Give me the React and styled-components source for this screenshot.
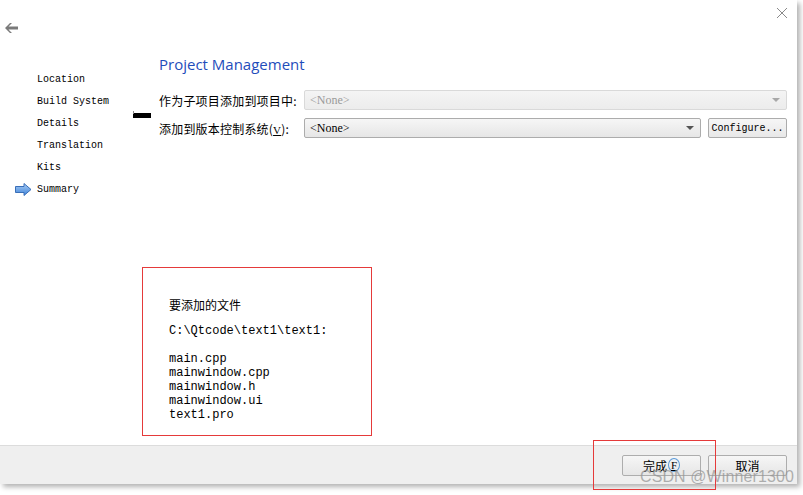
import React from 'react';
import styled, {createGlobalStyle} from 'styled-components';

const GlobalStyle = createGlobalStyle`
  html, body {
    margin: 0;
    padding: 0;
    background: #ffffff;
  }
  body {
    min-height: 495px;
    font-family: "Noto Sans CJK SC", "Noto Sans", sans-serif;
  }
`;

const Window = styled.div`
  position: relative;
  width: 797px;
  height: 484px;
  background: #ffffff;
  display: flex;
  flex-direction: column;
  box-shadow: 3px 3px 5px rgba(0, 0, 0, 0.3);
`;

const TitleBar = styled.div`
  height: 46px;
  display: flex;
  justify-content: space-between;
  align-items: flex-start;
`;

const BackButton = styled.div`
  margin: 22px 0 0 4px;
  width: 16px;
  height: 12px;
  display: flex;
`;

const CloseButton = styled.div`
  margin: 7px 9px 0 0;
  width: 12px;
  height: 12px;
  display: flex;
`;

const Body = styled.div`
  flex: 1;
  display: flex;
`;

const Sidebar = styled.div`
  width: 133px;
  padding-top: 22px;
  display: flex;
  flex-direction: column;
`;

const Step = styled.div`
  height: 22px;
  display: flex;
  align-items: center;
  font-family: "Liberation Mono", "DejaVu Sans Mono", monospace;
  font-size: 10px;
  color: #000;
`;

const StepMark = styled.div`
  width: 37px;
  display: flex;
  align-items: center;
  padding-left: 15px;
  box-sizing: border-box;
`;

const Divider = styled.div`
  width: 26px;
  padding-top: 66px;
`;

const Cursor = styled.div`
  width: 18px;
  height: 5px;
  background: #000;
  border-top: 1px solid #fff;
  position: relative;
  &::before {
    content: '';
    position: absolute;
    left: 0;
    top: -2px;
    width: 1px;
    height: 3px;
    background: #888;
  }
`;

const Content = styled.div`
  flex: 1;
  padding-right: 10px;
  display: flex;
  flex-direction: column;
`;

const Heading = styled.div`
  font-family: "Open Sans", "Noto Sans", sans-serif;
  font-size: 15px;
  color: #1f4dbb;
  height: 20px;
  line-height: 20px;
  margin-top: 8px;
`;

const FormRow = styled.div`
  display: flex;
  align-items: center;
  height: 20px;
  margin-top: ${p => p.$top}px;
  gap: 7px;
`;

const Label = styled.div`
  width: 138px;
  font-size: 12px;
  color: #000;
  white-space: nowrap;
  letter-spacing: 0.2px;
`;

const Mnemonic = styled.span`
  font-family: "Liberation Serif", serif;
  font-size: 11px;
  text-decoration: underline;
`;

const Combo = styled.div`
  flex: 1;
  height: 20px;
  box-sizing: border-box;
  border: 1px solid ${p => (p.$disabled ? '#d9d9d9' : '#acacac')};
  border-radius: 2px;
  background: ${p =>
    p.$disabled
      ? 'linear-gradient(#f4f4f4, #ececec)'
      : 'linear-gradient(#f6f6f6, #e6e6e6)'};
  display: flex;
  align-items: center;
  padding: 0 6px 0 5px;
  font-family: "Liberation Serif", serif;
  font-size: 12px;
  color: ${p => (p.$disabled ? '#9a9a9a' : '#000')};
`;

const ComboText = styled.span`
  flex: 1;
`;

const Caret = styled.span`
  width: 0;
  height: 0;
  border-left: 4px solid transparent;
  border-right: 4px solid transparent;
  border-top: 4px solid ${p => (p.$disabled ? '#a8a8a8' : '#555')};
`;

const ToolButton = styled.div`
  width: 79px;
  height: 20px;
  box-sizing: border-box;
  border: 1px solid #acacac;
  border-radius: 2px;
  background: linear-gradient(#f6f6f6, #e8e8e8);
  display: flex;
  align-items: center;
  justify-content: center;
  font-family: "Liberation Mono", monospace;
  font-size: 10px;
  color: #000;
`;

const FilesBox = styled.div`
  margin: 129px 0 0 -17px;
  width: 230px;
  height: 169px;
  box-sizing: border-box;
  border: 1px solid #e53a3a;
  padding: 28px 0 0 26px;
`;

const FilesTitle = styled.div`
  font-size: 12px;
  height: 18px;
  line-height: 18px;
  color: #000;
`;

const FilesPre = styled.pre`
  margin: 10px 0 0 0;
  font-family: "Liberation Mono", "Courier New", monospace;
  font-size: 12px;
  line-height: 14px;
  color: #000;
`;

const Footer = styled.div`
  height: 38px;
  background: #efefef;
  border-top: 1px solid #dcdcdc;
  display: flex;
  justify-content: flex-end;
  align-items: center;
  gap: 7px;
  padding-right: 10px;
`;

const DialogButton = styled.div`
  width: 79px;
  height: 21px;
  box-sizing: border-box;
  border: 1px solid #adadad;
  border-radius: 2px;
  background: linear-gradient(#f6f6f6, #e6e6e6);
  display: flex;
  align-items: center;
  justify-content: center;
  font-size: 12px;
  color: #000;
`;

const Circled = styled.span`
  display: inline-flex;
  align-items: center;
  justify-content: center;
  width: 12px;
  height: 14px;
  margin-left: 1px;
  border: 1px solid #5a9ad9;
  border-radius: 50%;
  font-family: "Liberation Serif", serif;
  font-size: 11px;
  text-decoration: underline;
  box-sizing: border-box;
`;

const Annotation = styled.div`
  position: absolute;
  left: 593px;
  top: 440px;
  width: 123px;
  height: 50px;
  box-sizing: border-box;
  border: 1px solid #e53a3a;
  pointer-events: none;
`;

const Watermark = styled.div`
  position: absolute;
  left: 640px;
  top: 468px;
  font-family: "Liberation Sans", Arial, sans-serif;
  font-size: 16px;
  color: rgba(150, 150, 150, 0.75);
  letter-spacing: 0.1px;
  pointer-events: none;
`;

const BackArrow = () => (
  <svg width="16" height="12" viewBox="0 0 16 12">
    <path d="M1 6 L6 1 L8 1 L4.5 4.6 L14 4.6 L14 7.4 L4.5 7.4 L8 11 L6 11 Z" fill="#7a7a7a" />
  </svg>
);

const CloseIcon = () => (
  <svg width="12" height="12" viewBox="0 0 12 12">
    <path d="M1 1 L11 11 M11 1 L1 11" stroke="#8a8a8a" strokeWidth="1" />
  </svg>
);

const CurrentArrow = () => (
  <svg width="17" height="13" viewBox="0 0 17 13">
    <defs>
      <linearGradient id="arr" x1="0" y1="0" x2="0" y2="1">
        <stop offset="0" stopColor="#a9cdf5" />
        <stop offset="1" stopColor="#3f83d8" />
      </linearGradient>
    </defs>
    <path d="M0.5 3.5 L9 3.5 L9 0.5 L16 6.5 L9 12.5 L9 9.5 L0.5 9.5 Z" fill="url(#arr)" stroke="#3a6fb8" strokeWidth="1" />
  </svg>
);

const steps = ['Location', 'Build System', 'Details', 'Translation', 'Kits', 'Summary'];

const files = `C:\\Qtcode\\text1\\text1:

main.cpp
mainwindow.cpp
mainwindow.h
mainwindow.ui
text1.pro`;

export default function App() {
  return (
    <>
      <GlobalStyle />
      <Window>
        <TitleBar>
          <BackButton>
            <BackArrow />
          </BackButton>
          <CloseButton>
            <CloseIcon />
          </CloseButton>
        </TitleBar>
        <Body>
          <Sidebar>
            {steps.map(s => (
              <Step key={s}>
                <StepMark>{s === 'Summary' && <CurrentArrow />}</StepMark>
                {s}
              </Step>
            ))}
          </Sidebar>
          <Divider>
            <Cursor />
          </Divider>
          <Content>
            <Heading>Project Management</Heading>
            <FormRow $top={16}>
              <Label>作为子项目添加到项目中:</Label>
              <Combo $disabled>
                <ComboText>&lt;None&gt;</ComboText>
                <Caret $disabled />
              </Combo>
            </FormRow>
            <FormRow $top={8}>
              <Label>
                添加到版本控制系统(<Mnemonic>V</Mnemonic>):
              </Label>
              <Combo>
                <ComboText>&lt;None&gt;</ComboText>
                <Caret />
              </Combo>
              <ToolButton>Configure...</ToolButton>
            </FormRow>
            <FilesBox>
              <FilesTitle>要添加的文件</FilesTitle>
              <FilesPre>{files}</FilesPre>
            </FilesBox>
          </Content>
        </Body>
        <Footer>
          <DialogButton>
            完成<Circled>F</Circled>
          </DialogButton>
          <DialogButton>取消</DialogButton>
        </Footer>
        <Annotation />
        <Watermark>CSDN @Winner1300</Watermark>
      </Window>
    </>
  );
}
